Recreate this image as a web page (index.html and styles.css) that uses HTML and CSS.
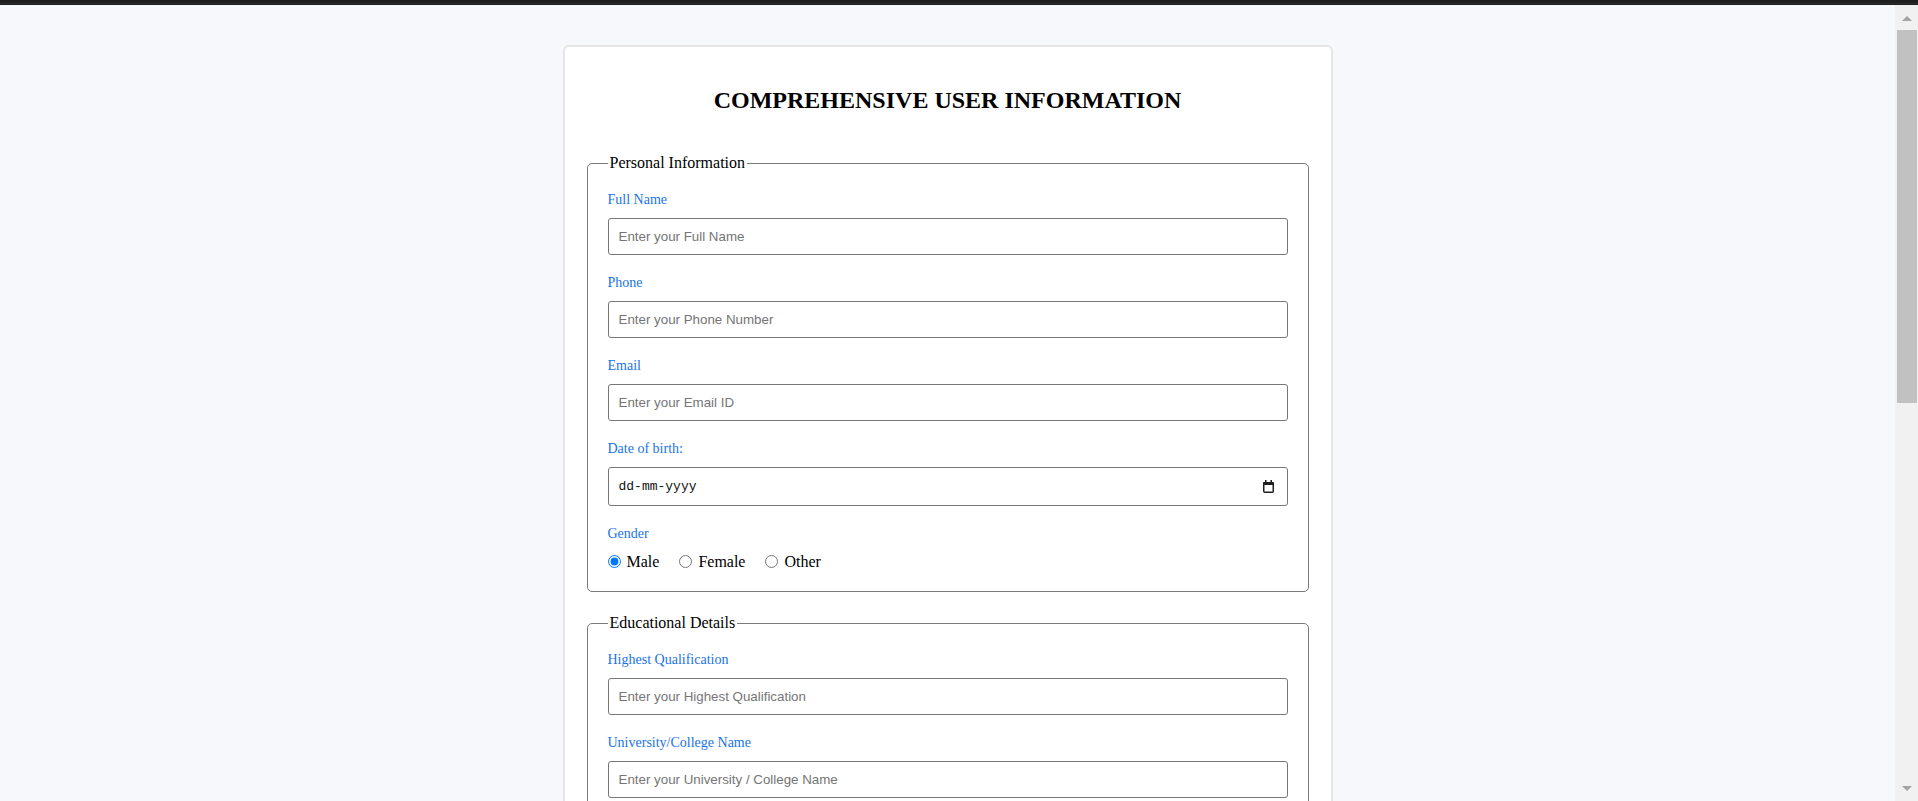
FILE: index.html
```html
<!DOCTYPE html>
<html lang="en">
<head>
<meta charset="utf-8">
<title>Comprehensive User Information</title>
<link rel="stylesheet" href="styles.css">
</head>
<body>
<div class="topbar"></div>
<div class="window">
  <main class="viewport">
    <div class="card">
      <h2 class="title">COMPREHENSIVE USER INFORMATION</h2>
      <form class="form">
        <fieldset class="section">
          <legend class="section-legend">Personal Information</legend>
          <div class="field">
            <label class="field-label" for="fullname">Full Name</label>
            <input class="text-input" id="fullname" type="text" placeholder="Enter your Full Name">
          </div>
          <div class="field">
            <label class="field-label" for="phone">Phone</label>
            <input class="text-input" id="phone" type="tel" placeholder="Enter your Phone Number">
          </div>
          <div class="field">
            <label class="field-label" for="email">Email</label>
            <input class="text-input" id="email" type="email" placeholder="Enter your Email ID">
          </div>
          <div class="field">
            <label class="field-label" for="dob">Date of birth:</label>
            <div class="date-field">
              <input class="text-input date-input" id="dob" type="text" placeholder="dd-mm-yyyy">
              <svg class="date-icon" width="11" height="13" viewBox="0 0 11 13" aria-hidden="true">
                <rect x="2" y="0" width="1.5" height="3" fill="#1f1f1f"/>
                <rect x="7.5" y="0" width="1.5" height="3" fill="#1f1f1f"/>
                <rect x="0.75" y="2.75" width="9.5" height="9.5" rx="1" fill="none" stroke="#1f1f1f" stroke-width="1.5"/>
                <rect x="0" y="2" width="11" height="3" rx="1" fill="#1f1f1f"/>
              </svg>
            </div>
          </div>
          <div class="field field-last">
            <span class="field-label">Gender</span>
            <div class="radio-row">
              <label class="radio-option"><input class="radio" type="radio" name="gender" checked><span>Male</span></label>
              <label class="radio-option"><input class="radio" type="radio" name="gender"><span>Female</span></label>
              <label class="radio-option"><input class="radio" type="radio" name="gender"><span>Other</span></label>
            </div>
          </div>
        </fieldset>
        <fieldset class="section">
          <legend class="section-legend">Educational Details</legend>
          <div class="field">
            <label class="field-label" for="qual">Highest Qualification</label>
            <input class="text-input" id="qual" type="text" placeholder="Enter your Highest Qualification">
          </div>
          <div class="field">
            <label class="field-label" for="uni">University/College Name</label>
            <input class="text-input" id="uni" type="text" placeholder="Enter your University / College Name">
          </div>
          <div class="field">
            <label class="field-label" for="year">Year of Passing</label>
            <input class="text-input" id="year" type="text" placeholder="Enter your Year of Passing">
          </div>
          <div class="field field-last">
            <label class="field-label" for="cgpa">Percentage / CGPA</label>
            <input class="text-input" id="cgpa" type="text" placeholder="Enter your Percentage / CGPA">
          </div>
        </fieldset>
      </form>
    </div>
  </main>
  <div class="scrollbar">
    <div class="sb-btn"><span class="sb-arrow-up"></span></div>
    <div class="sb-thumb"></div>
    <div class="sb-track"></div>
    <div class="sb-btn"><span class="sb-arrow-down"></span></div>
  </div>
</div>
</body>
</html>
```
FILE: styles.css
```css
html, body {
  margin: 0;
  padding: 0;
}

body {
  height: 801px;
  overflow: hidden;
  display: flex;
  flex-direction: column;
  font-family: "Liberation Serif", "Times New Roman", serif;
  background: #f7f8fc;
}

.topbar {
  flex: 0 0 5px;
  background: linear-gradient(#1f1f1f 0 3px, #2e2e2e 3px 4px, #1f1f1f 4px 5px);
}

.window {
  flex: 1;
  display: flex;
  min-height: 0;
}

.viewport {
  flex: 1;
  overflow: hidden;
  background: #f7f8fc;
}

.card {
  width: 770px;
  box-sizing: border-box;
  margin: 40px auto;
  background: #ffffff;
  border: 2px solid #e6e6e8;
  border-radius: 6px;
  padding: 20px;
}

.title {
  margin: 20px 0 40px;
  text-align: center;
  font-family: "Liberation Serif", "Times New Roman", serif;
  font-size: 24px;
  font-weight: 700;
  color: #000;
}

.form {
  margin: 0;
}

.section {
  margin: 0 2px 22px;
  padding: 20px;
  border: 1px solid #7a7a7a;
  border-radius: 5px;
}

.section-legend {
  padding: 0 2px;
  font-size: 16px;
  color: #000;
}

.field {
  margin-bottom: 20px;
}

.field-last {
  margin-bottom: 0;
}

.field-label {
  display: block;
  margin-bottom: 10px;
  font-size: 14px;
  color: #1a73e8;
}

.text-input {
  display: block;
  width: 100%;
  box-sizing: border-box;
  margin: 0;
  padding: 10px;
  border: 1px solid #767676;
  border-radius: 3px;
  font-family: "Liberation Sans", Arial, sans-serif;
  font-size: 13.333px;
  color: #000;
  background: #fff;
}

.text-input::placeholder {
  color: #757575;
}

.date-field {
  position: relative;
}

.date-input {
  height: 39px;
  padding-right: 36px;
  font-family: "Liberation Mono", "Courier New", monospace;
  font-size: 13px;
}

.date-input::placeholder {
  color: #111;
}

.date-icon {
  position: absolute;
  right: 14px;
  top: 13px;
}

.radio-row {
  display: flex;
  align-items: center;
  gap: 20px;
  height: 19px;
  margin-top: 3px;
}

.radio-option {
  display: flex;
  align-items: center;
  gap: 6px;
  font-size: 16px;
  color: #000;
}

.radio {
  margin: 0;
  width: 13px;
  height: 13px;
}

.scrollbar {
  flex: 0 0 23px;
  display: flex;
  flex-direction: column;
  background: #f1f1f1;
}

.sb-btn {
  flex: 0 0 25px;
  display: flex;
  align-items: center;
  justify-content: center;
}

.sb-arrow-up {
  width: 0;
  height: 0;
  margin-top: 1px;
  border-left: 5px solid transparent;
  border-right: 5px solid transparent;
  border-bottom: 5px solid #a3a3a3;
}

.sb-arrow-down {
  width: 0;
  height: 0;
  border-left: 5px solid transparent;
  border-right: 5px solid transparent;
  border-top: 5px solid #a3a3a3;
}

.sb-thumb {
  flex: 0 0 373px;
  margin: 0 1px 0 2px;
  background: #c1c1c1;
}

.sb-track {
  flex: 1;
}
```
